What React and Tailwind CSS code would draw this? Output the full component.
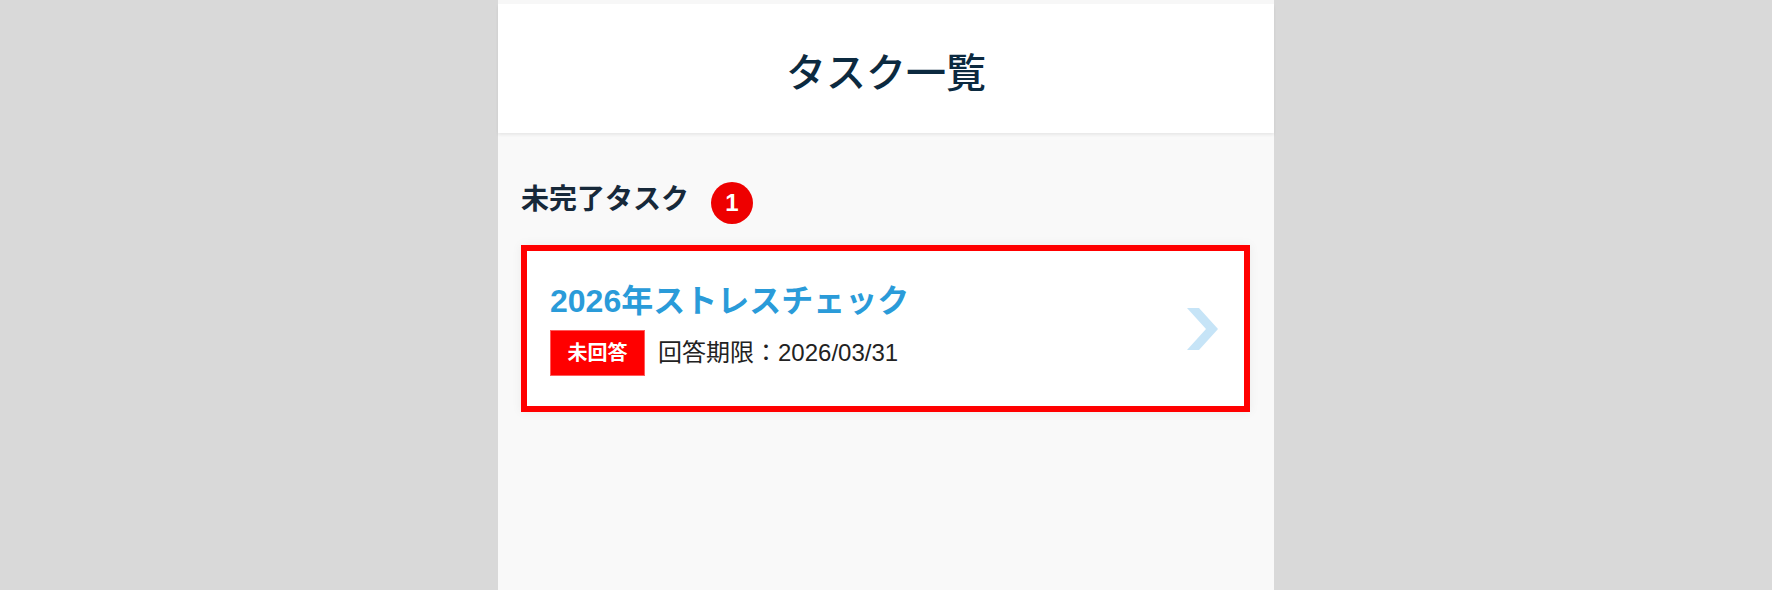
import React from 'react';

const jp = 'font-["Liberation_Sans","Noto_Sans_CJK_JP",sans-serif]';

const Chevron = () => (
  <svg width="31" height="42" viewBox="0 0 31 42" className="shrink-0">
    <polygon points="0,0 12,0 31,21 12,42 0,42 19,21" fill="#c6e4f7" />
  </svg>
);

const TaskCard = ({ title, status, deadline }) => (
  <div className="h-[167px] border-[6px] border-[#ff0000] bg-white shadow-[0_0_10px_rgba(0,0,0,0.06)] flex items-center justify-between pl-[23px] pr-[26px]">
    <div className="flex flex-col gap-[9px]">
      <div className="text-[32px] leading-[40px] font-bold text-[#2a9bd9]">{title}</div>
      <div className="flex items-center gap-[13px]">
        <span className="h-[46px] w-[95px] bg-[#ff0000] border border-[#ff5c5c] text-white text-[20px] font-bold flex items-center justify-center">
          {status}
        </span>
        <span className="text-[24px] leading-[30px] text-[#222]">回答期限：{deadline}</span>
      </div>
    </div>
    <Chevron />
  </div>
);

const App = () => (
  <div className={`min-h-screen bg-[#d9d9d9] flex justify-center ${jp}`}>
    <div className="w-[776px] min-h-[590px] bg-[#f9f9f9]">
      <div className="h-[4px] bg-[#f7f7f7]" />
      <header className="h-[129px] bg-white flex items-center justify-center pt-[8px] shadow-[0_2px_3px_rgba(0,0,0,0.07)]">
        <h1 className="text-[40px] leading-[40px] font-medium text-[#0c2a40]">タスク一覧</h1>
      </header>
      <section className="pl-[23px] pr-[24px] pt-[43px]">
        <div className="flex items-center gap-[22px]">
          <h2 className="text-[28px] leading-[40px] font-bold text-[#17293a]">未完了タスク</h2>
          <span className="mt-[6px] w-[42px] h-[42px] rounded-full bg-[#ee0000] text-white text-[24px] font-bold flex items-center justify-center">
            1
          </span>
        </div>
        <div className="mt-[21px]">
          <TaskCard title="2026年ストレスチェック" status="未回答" deadline="2026/03/31" />
        </div>
      </section>
    </div>
  </div>
);

export default App;
